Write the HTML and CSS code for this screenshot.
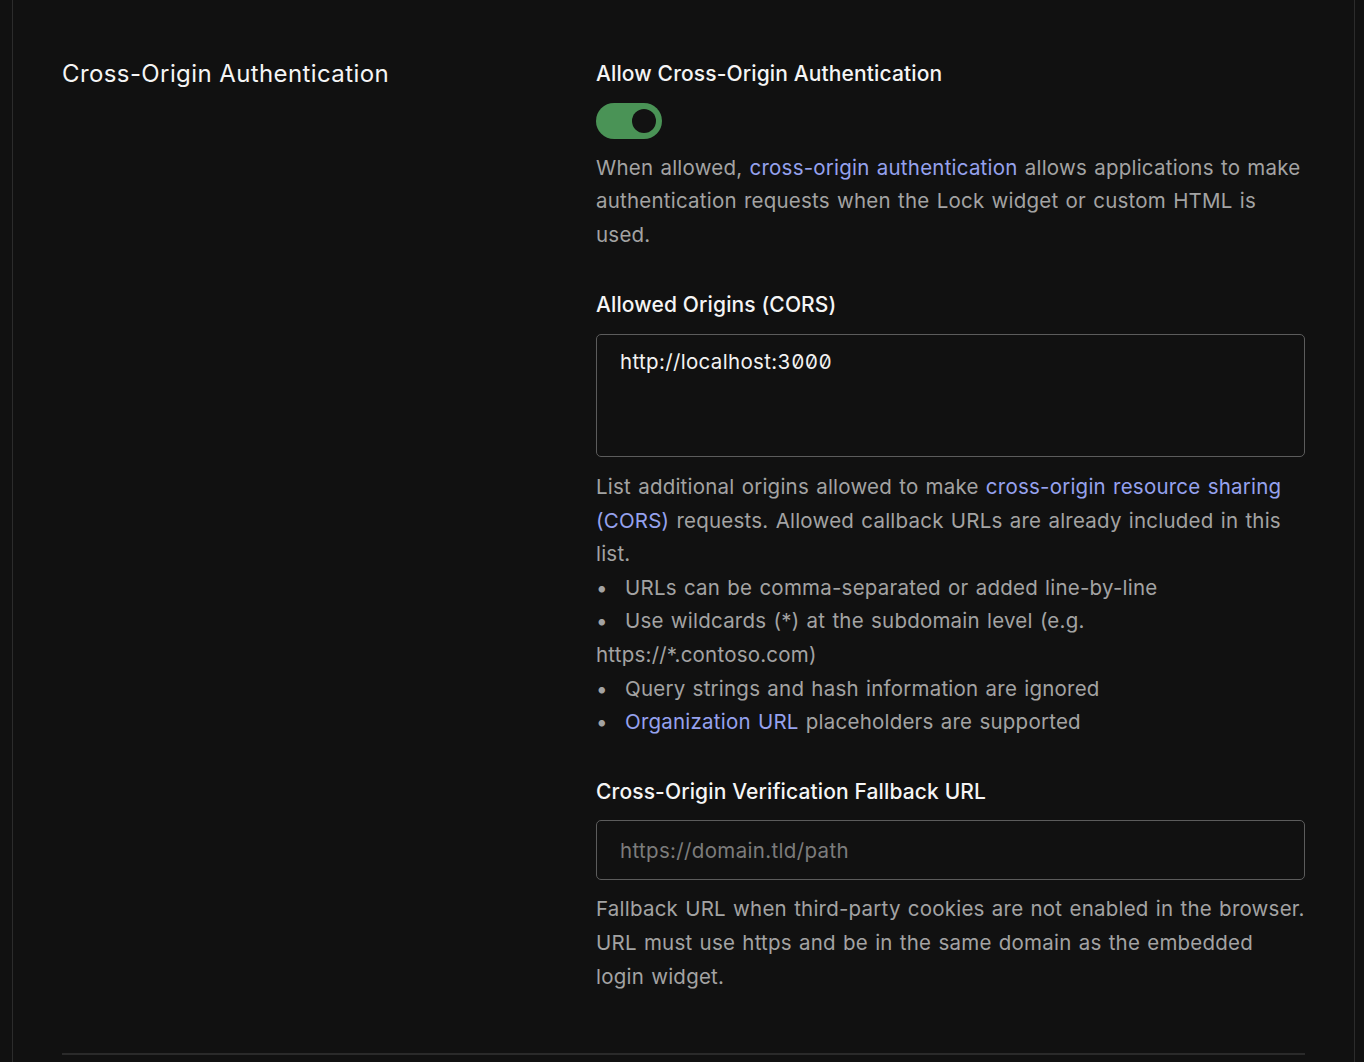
FILE: index.html
```html
<!DOCTYPE html>
<html lang="en">
<head>
<meta charset="utf-8">
<title>Cross-Origin Authentication</title>
<link rel="stylesheet" href="styles.css">
</head>
<body>
<div class="panel">
  <section class="section">
    <h2 class="section-title">Cross-Origin Authentication</h2>
    <div class="fields">
      <div class="field field-toggle">
        <div class="label">Allow Cross-Origin Authentication</div>
        <div class="toggle"><span class="knob"></span></div>
        <p class="help">When allowed, <a class="link" href="#">cross-origin authentication</a> allows applications to make authentication requests when the Lock widget or custom HTML is used.</p>
      </div>
      <div class="field">
        <div class="label">Allowed Origins (CORS)</div>
        <div class="textarea">http://localhost:<span class="digits">3000</span></div>
        <p class="help help-after-box">List additional origins allowed to make <a class="link" href="#">cross-origin resource sharing (CORS)</a> requests. Allowed callback URLs are already included in this list.</p>
        <ul class="bullets">
          <li>URLs can be comma-separated or added line-by-line</li>
          <li>Use wildcards (*) at the subdomain level (e.g. https://*.contoso.com)</li>
          <li>Query strings and hash information are ignored</li>
          <li><a class="link" href="#">Organization URL</a> placeholders are supported</li>
        </ul>
      </div>
      <div class="field">
        <div class="label">Cross-Origin Verification Fallback URL</div>
        <div class="input"><span class="placeholder">https://domain.tld/path</span></div>
        <p class="help help-after-input">Fallback URL when third-party cookies are not enabled in the browser. URL must use https and be in the same domain as the embedded login widget.</p>
      </div>
    </div>
  </section>
</div>
</body>
</html>
```

FILE: styles.css
```css
html, body {
  margin: 0;
  padding: 0;
  background: #111111;
  height: 100%;
}
body {
  font-family: Inter, "Noto Sans", sans-serif;
  color: #f2f2f2;
  overflow: hidden;
}
.panel {
  margin-left: 12px;
  min-height: 1062px;
  border-left: 1px solid #2c2c2c;
  border-right: 1px solid #2c2c2c;
  padding: 0 49px;
  box-sizing: content-box;
  width: 1243px;
}
.section {
  display: grid;
  grid-template-columns: 534px 709px;
  padding-top: 57px;
  padding-bottom: 60px;
  border-bottom: 2px solid #2a2a2a;
}
.section-title {
  margin: 0;
  font-size: 24px;
  font-weight: 400;
  letter-spacing: 0.4px;
  line-height: 34px;
  color: #f5f5f5;
}
.fields {
  display: flex;
  flex-direction: column;
  gap: 36px;
}
.field-toggle {
  margin-bottom: 1px;
}
.label {
  font-size: 21px;
  font-weight: 500;
  letter-spacing: 0.13px;
  line-height: 33.6px;
  color: #f5f5f5;
}
.toggle {
  margin-top: 12px;
  width: 66px;
  height: 36px;
  border-radius: 18px;
  background: #4a9356;
  display: flex;
  align-items: center;
  justify-content: flex-end;
  padding-right: 6px;
  box-sizing: border-box;
}
.knob {
  width: 24px;
  height: 24px;
  border-radius: 50%;
  background: #121212;
}
.help {
  margin: 12px 0 0;
  font-size: 20.5px;
  letter-spacing: 0.22px;
  word-spacing: 1.2px;
  line-height: 33.6px;
  color: #a3a3a3;
}
.help-after-box {
  margin-top: 13px;
}
.help-after-input {
  margin-top: 12px;
}
.link {
  color: #96a2ee;
  text-decoration: none;
}
.textarea {
  margin-top: 12px;
  height: 123px;
  border: 1px solid #5c5c5c;
  border-radius: 5px;
  box-sizing: border-box;
  padding: 12px 23px;
  font-size: 20.5px;
  letter-spacing: 0.34px;
  line-height: 30px;
  color: #f2f2f2;
}
.digits {
  font-feature-settings: "zero" 1, "tnum" 1;
}
.input {
  margin-top: 12px;
  height: 60px;
  border: 1px solid #5c5c5c;
  border-radius: 5px;
  box-sizing: border-box;
  padding: 0 23px;
  display: flex;
  align-items: center;
  font-size: 20.5px;
  letter-spacing: 0.34px;
}
.placeholder {
  color: #7c7c7c;
}
.bullets {
  list-style: none;
  margin: 0;
  padding: 0;
  font-size: 20.5px;
  letter-spacing: 0.22px;
  word-spacing: 1.2px;
  line-height: 33.6px;
  color: #a3a3a3;
}
.bullets li::before {
  content: "\2022";
  display: inline-block;
  width: 29px;
  color: #a3a3a3;
}
```
